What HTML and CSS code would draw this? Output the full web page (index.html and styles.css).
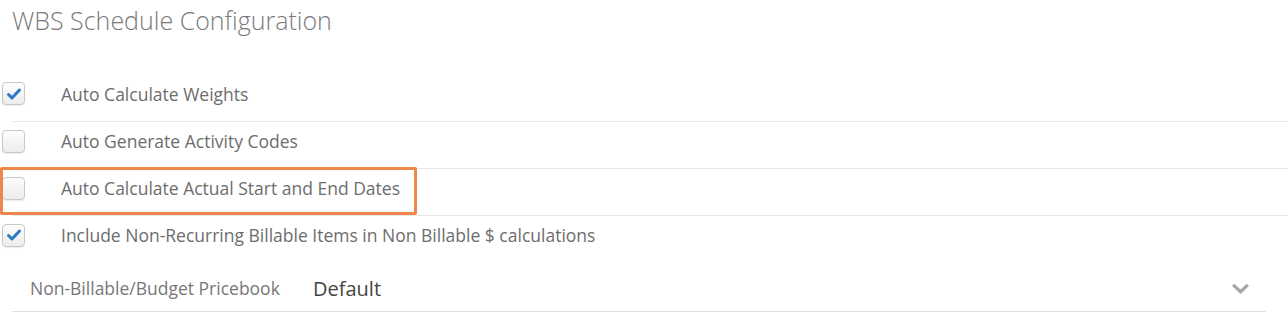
FILE: index.html
```html
<!DOCTYPE html>
<html lang="en">
<head>
    <meta charset="UTF-8">
    <title>WBS Schedule Configuration</title>
    <link rel="stylesheet" href="styles.css">
</head>
<body>
    <h1 class="page-title">WBS Schedule Configuration</h1>

    <div class="settings">
        <div class="setting-row first">
            <span class="check checked">
                <svg viewBox="0 0 16 16" width="16" height="16"><path d="M2.5 8.5 L6 12 L13.5 4" fill="none" stroke="#2b78c5" stroke-width="3" stroke-linecap="round" stroke-linejoin="round"/></svg>
            </span>
            <span class="setting-label">Auto Calculate Weights</span>
        </div>
        <div class="setting-row">
            <span class="check"></span>
            <span class="setting-label">Auto Generate Activity Codes</span>
        </div>
        <div class="setting-row highlighted">
            <span class="check"></span>
            <span class="setting-label">Auto Calculate Actual Start and End Dates</span>
            <span class="highlight-box"></span>
        </div>
        <div class="setting-row">
            <span class="check checked">
                <svg viewBox="0 0 16 16" width="16" height="16"><path d="M2.5 8.5 L6 12 L13.5 4" fill="none" stroke="#2b78c5" stroke-width="3" stroke-linecap="round" stroke-linejoin="round"/></svg>
            </span>
            <span class="setting-label">Include Non-Recurring Billable Items in Non Billable $ calculations</span>
        </div>

        <!-- Pricebook select -->
        <div class="select-row">
            <span class="select-label">Non-Billable/Budget Pricebook</span>
            <span class="select-value">Default</span>
            <svg class="chevron" viewBox="0 0 20 12" width="19" height="11"><path d="M2 2 L10 9.5 L18 2" fill="none" stroke="#a6a6a6" stroke-width="3.6"/></svg>
        </div>
    </div>
</body>
</html>
```

FILE: styles.css
```css
* {
    margin: 0;
    padding: 0;
    box-sizing: border-box;
    font-family: 'Open Sans', sans-serif;
}

body {
    background-color: #ffffff;
    color: #666666;
}

.page-title {
    font-weight: 300;
    font-size: 25px;
    line-height: 32px;
    color: #7a7a7a;
    padding: 4px 0 0 12px;
    height: 74px;
}

.setting-row {
    position: relative;
    display: flex;
    align-items: center;
    height: 47px;
    margin-left: 12px;
    padding-bottom: 8px;
    border-top: 1px solid #e6e6e6;
}

.setting-row.first {
    border-top: none;
}

.check {
    display: flex;
    align-items: center;
    justify-content: center;
    width: 23px;
    height: 23px;
    margin-left: -10px;
    border: 1px solid #c8c8c8;
    border-radius: 4px;
    background: linear-gradient(#fdfdfd, #ececec);
    box-shadow: 0 1px 1px rgba(0, 0, 0, 0.08);
}

.setting-label {
    margin-left: 36px;
    font-size: 17.5px;
    color: #6d6d6d;
}

.highlight-box {
    position: absolute;
    top: -2px;
    left: -12px;
    width: 417px;
    height: 48px;
    border: 3px solid #f0874a;
    border-radius: 2px;
}

.select-row {
    display: flex;
    align-items: center;
    height: 50px;
    margin: 0 22px 0 12px;
    border-bottom: 1px solid #e0e0e0;
    padding-top: 3px;
}

.select-label {
    margin-left: 18px;
    width: 283px;
    font-size: 17.5px;
    color: #777777;
}

.select-value {
    flex: 1;
    font-size: 20px;
    color: #444444;
}

.chevron {
    margin-right: 16px;
}
```
